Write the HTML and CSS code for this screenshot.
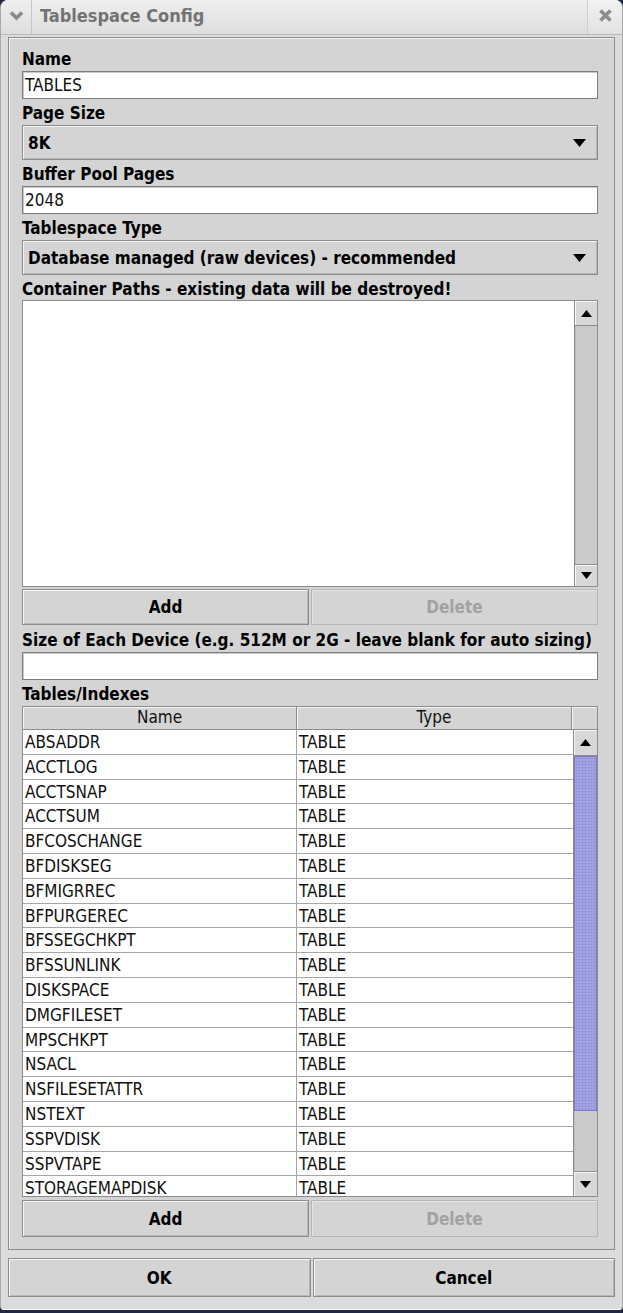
FILE: index.html
```html
<!DOCTYPE html>
<html>
<head>
<meta charset="utf-8">
<title>Tablespace Config</title>
<link rel="stylesheet" href="styles.css">
</head>
<body>
<div class="window">
  <div class="titlebar">
    <div class="tb-menu">
      <svg width="15" height="11" viewBox="0 0 15 11"><path d="M2 2.5 L7.5 8 L13 2.5" fill="none" stroke="#8a8a8a" stroke-width="3.6"/></svg>
    </div>
    <div class="tb-title">Tablespace Config</div>
    <div class="tb-close">
      <svg width="15" height="15" viewBox="0 0 15 15"><path d="M2.5 2.5 L12.5 12.5 M12.5 2.5 L2.5 12.5" stroke="#8e8e8e" stroke-width="3.8"/></svg>
    </div>
  </div>
  <div class="client">
    <div class="panel">
      <div class="lbl">Name</div>
      <div class="input">TABLES</div>
      <div class="lbl">Page Size</div>
      <div class="combo"><span>8K</span><svg class="arrow" width="13" height="8" viewBox="0 0 13 8"><path d="M0 0 H13 L6.5 8 Z" fill="#000"/></svg></div>
      <div class="lbl">Buffer Pool Pages</div>
      <div class="input">2048</div>
      <div class="lbl">Tablespace Type</div>
      <div class="combo"><span>Database managed (raw devices) - recommended</span><svg class="arrow" width="13" height="8" viewBox="0 0 13 8"><path d="M0 0 H13 L6.5 8 Z" fill="#000"/></svg></div>
      <div class="lbl lbl-short">Container Paths - existing data will be destroyed!</div>
      <div class="list">
        <div class="list-area"></div>
        <div class="vscroll">
          <div class="sbtn"><svg width="11" height="7" viewBox="0 0 11 7"><path d="M0 7 H11 L5.5 0 Z" fill="#000"/></svg></div>
          <div class="track"></div>
          <div class="sbtn sbtn-down"><svg width="11" height="7" viewBox="0 0 11 7"><path d="M0 0 H11 L5.5 7 Z" fill="#000"/></svg></div>
        </div>
      </div>
      <div class="btns">
        <div class="btn">Add</div>
        <div class="btn disabled">Delete</div>
      </div>
      <div class="lbl lbl-tall">Size of Each Device (e.g. 512M or 2G - leave blank for auto sizing)</div>
      <div class="input"></div>
      <div class="lbl">Tables/Indexes</div>
      <div class="table">
        <div class="thead">
          <div class="th">Name</div>
          <div class="th">Type</div>
          <div class="th th-corner"></div>
        </div>
        <div class="tbody">
          <div class="rows">
            <div class="tr"><div class="td">ABSADDR</div><div class="td">TABLE</div></div>
            <div class="tr"><div class="td">ACCTLOG</div><div class="td">TABLE</div></div>
            <div class="tr"><div class="td">ACCTSNAP</div><div class="td">TABLE</div></div>
            <div class="tr"><div class="td">ACCTSUM</div><div class="td">TABLE</div></div>
            <div class="tr"><div class="td">BFCOSCHANGE</div><div class="td">TABLE</div></div>
            <div class="tr"><div class="td">BFDISKSEG</div><div class="td">TABLE</div></div>
            <div class="tr"><div class="td">BFMIGRREC</div><div class="td">TABLE</div></div>
            <div class="tr"><div class="td">BFPURGEREC</div><div class="td">TABLE</div></div>
            <div class="tr"><div class="td">BFSSEGCHKPT</div><div class="td">TABLE</div></div>
            <div class="tr"><div class="td">BFSSUNLINK</div><div class="td">TABLE</div></div>
            <div class="tr"><div class="td">DISKSPACE</div><div class="td">TABLE</div></div>
            <div class="tr"><div class="td">DMGFILESET</div><div class="td">TABLE</div></div>
            <div class="tr"><div class="td">MPSCHKPT</div><div class="td">TABLE</div></div>
            <div class="tr"><div class="td">NSACL</div><div class="td">TABLE</div></div>
            <div class="tr"><div class="td">NSFILESETATTR</div><div class="td">TABLE</div></div>
            <div class="tr"><div class="td">NSTEXT</div><div class="td">TABLE</div></div>
            <div class="tr"><div class="td">SSPVDISK</div><div class="td">TABLE</div></div>
            <div class="tr"><div class="td">SSPVTAPE</div><div class="td">TABLE</div></div>
            <div class="tr"><div class="td">STORAGEMAPDISK</div><div class="td">TABLE</div></div>
          </div>
          <div class="vscroll tscroll">
            <div class="sbtn"><svg width="11" height="7" viewBox="0 0 11 7"><path d="M0 7 H11 L5.5 0 Z" fill="#000"/></svg></div>
            <div class="thumb"></div>
            <div class="track"></div>
            <div class="sbtn sbtn-down"><svg width="11" height="7" viewBox="0 0 11 7"><path d="M0 0 H11 L5.5 7 Z" fill="#000"/></svg></div>
          </div>
        </div>
      </div>
      <div class="btns btns-bottom">
        <div class="btn">Add</div>
        <div class="btn disabled">Delete</div>
      </div>
    </div>
    <div class="dlg-btns">
      <div class="btn">OK</div>
      <div class="btn">Cancel</div>
    </div>
  </div>
</div>
</body>
</html>
```

FILE: styles.css
```css
html, body {
  margin: 0;
  padding: 0;
}
body {
  width: 623px;
  height: 1313px;
  overflow: hidden;
  background: #1d2842;
  font-family: "DejaVu Sans Condensed", "DejaVu Sans", sans-serif;
  font-size: 17px;
  color: #000;
}
.window {
  width: 623px;
  height: 1310px;
  box-sizing: border-box;
  background: #dcdcdc;
  border-radius: 8px 8px 4px 4px;
  border-left: 1px solid #a9a9a9;
  border-right: 1px solid #a9a9a9;
  overflow: hidden;
  display: flex;
  flex-direction: column;
}
.titlebar {
  height: 35px;
  box-sizing: border-box;
  flex: none;
  display: flex;
  align-items: stretch;
  background: linear-gradient(#efefef, #dedede);
  border-bottom: 1px solid #b9b9b9;
}
.tb-menu {
  width: 30px;
  border-right: 1px solid #c6c6c6;
  display: flex;
  align-items: center;
  justify-content: center;
  padding-bottom: 4px;
}
.tb-title {
  flex: 1;
  padding-left: 8px;
  font-weight: bold;
  font-size: 18px;
  line-height: 32px;
  color: #737373;
}
.tb-close {
  width: 34px;
  border-left: 1px solid #cfcfcf;
  background: linear-gradient(#f2f2f2, #e2e2e2);
  display: flex;
  align-items: center;
  justify-content: center;
  padding-bottom: 4px;
}
.client {
  flex: 1;
  display: flex;
  flex-direction: column;
  padding: 2px 7px 0 7px;
  border-bottom: 1px solid #ffffff;
}
.panel {
  background: #d4d4d4;
  border: 1px solid #8c8c8c;
  box-shadow: inset 1px 1px 0 #f2f2f2;
  padding: 7px 16px 12px 13px;
  display: flex;
  flex-direction: column;
}
.lbl {
  height: 26px;
  box-sizing: border-box;
  padding-top: 3px;
  line-height: 23px;
  font-weight: bold;
  white-space: nowrap;
}
.lbl-short { height: 25px; line-height: 22px; }
.lbl-tall { height: 27px; line-height: 24px; }
.input {
  height: 28px;
  box-sizing: border-box;
  background: #fff;
  border: 1px solid #7e7e7e;
  box-shadow: inset 1px 1px 0 #c9c9c9;
  padding-left: 2px;
  line-height: 26px;
  white-space: nowrap;
  color: #111;
}
.combo {
  height: 35px;
  box-sizing: border-box;
  border: 1px solid #8c8c8c;
  background: #d4d4d4;
  box-shadow: inset 1px 1px 0 #f4f4f4, inset -1px -1px 0 #b4b4b4;
  display: flex;
  align-items: center;
  justify-content: space-between;
  padding: 0 11px 0 5px;
  font-weight: bold;
  white-space: nowrap;
}
.arrow { flex: none; }
.list {
  height: 287px;
  box-sizing: border-box;
  display: flex;
  border: 1px solid #8c8c8c;
}
.list-area {
  flex: 1;
  background: #fff;
}
.vscroll {
  width: 22px;
  flex: none;
  display: flex;
  flex-direction: column;
  border-left: 1px solid #8c8c8c;
  background: #cdcdcd;
}
.sbtn {
  height: 25px;
  flex: none;
  box-sizing: border-box;
  background: #d8d8d8;
  border-bottom: 1px solid #8c8c8c;
  box-shadow: inset 1px 1px 0 #fafafa;
  display: flex;
  align-items: center;
  justify-content: center;
}
.sbtn-down {
  height: 22px;
  border-bottom: none;
  border-top: 1px solid #8c8c8c;
}
.track {
  flex: 1;
  background: #cbcbcb;
  box-shadow: inset 1px 0 0 #bdbdbd;
}
.btns {
  display: flex;
  gap: 2px;
  margin-top: 2px;
  height: 36px;
}
.btns-bottom {
  margin-top: 3px;
  height: 37px;
}
.btn {
  flex: 1;
  box-sizing: border-box;
  border: 1px solid #8c8c8c;
  background: #d4d4d4;
  box-shadow: inset 1px 1px 0 #f6f6f6, inset -1px -1px 0 #b8b8b8;
  font-weight: bold;
  display: flex;
  align-items: center;
  justify-content: center;
}
.btn.disabled {
  color: #a2a2a2;
  border-color: #b6b6b6;
  box-shadow: inset 1px 1px 0 #e6e6e6;
}
.table {
  height: 491px;
  box-sizing: border-box;
  border: 1px solid #8c8c8c;
  display: flex;
  flex-direction: column;
  overflow: hidden;
  background: #d4d4d4;
}
.thead {
  height: 23px;
  flex: none;
  display: flex;
}
.th {
  width: 275px;
  box-sizing: border-box;
  border-right: 1px solid #8c8c8c;
  border-bottom: 1px solid #8c8c8c;
  background: #d4d4d4;
  box-shadow: inset 1px 1px 0 #f6f6f6;
  text-align: center;
  line-height: 21px;
  color: #111;
}
.th:first-child { width: 274px; }
.th-corner {
  flex: 1;
  border-right: none;
}
.tbody {
  flex: 1;
  display: flex;
  overflow: hidden;
}
.rows {
  flex: 1;
  overflow: hidden;
  background: #fff;
}
.tr {
  height: 24.8px;
  box-sizing: border-box;
  display: flex;
  border-bottom: 1px solid #a6a6a6;
}
.td {
  width: 275px;
  box-sizing: border-box;
  border-right: 1px solid #a6a6a6;
  padding-left: 2px;
  line-height: 24px;
  white-space: nowrap;
  color: #111;
}
.td:first-child { width: 274px; }
.td:last-child { width: 274px; border-right: none; }
.tscroll {
  width: 23px;
  border-left: 1px solid #8c8c8c;
}
.tscroll .sbtn { height: 26px; }
.tscroll .sbtn-down { height: 25px; }
.thumb {
  height: 355px;
  flex: none;
  box-sizing: border-box;
  border: 1px solid #7c7cc4;
  background-color: #a4a4e4;
  background-image: radial-gradient(circle, #8e8ed6 0.8px, transparent 1.2px);
  background-size: 3px 3px;
}
.dlg-btns {
  display: flex;
  gap: 2px;
  margin-top: 8px;
  height: 39px;
}
```
